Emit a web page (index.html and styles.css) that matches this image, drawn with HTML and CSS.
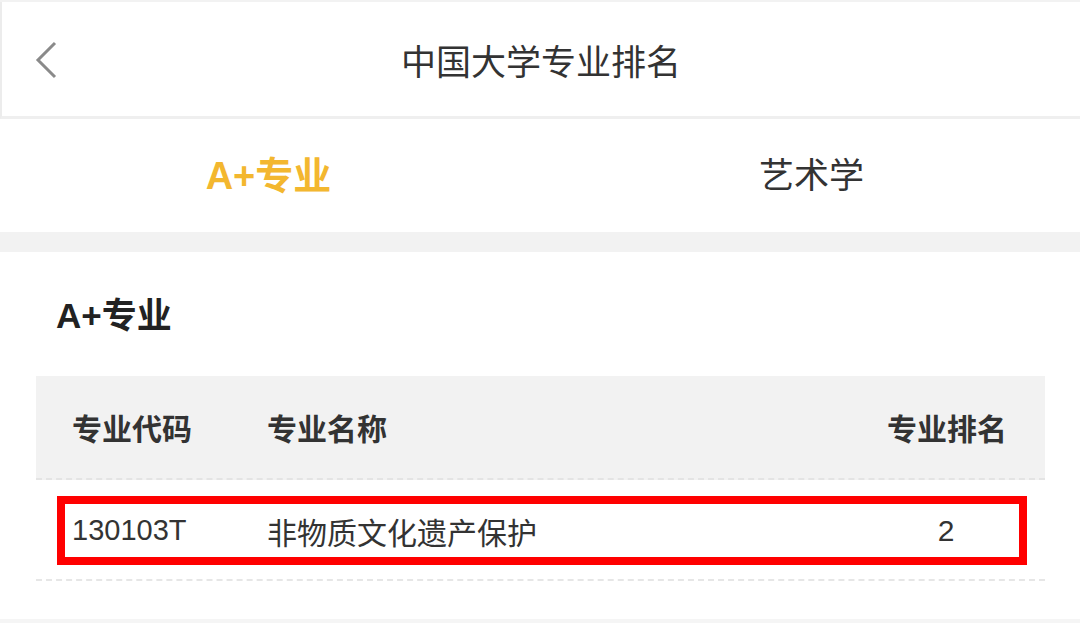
FILE: index.html
```html
<!DOCTYPE html>
<html>
    <head>
        <title>中国大学专业排名</title>
        <meta charset="UTF-8">
        <meta name="viewport" content="width=device-width, initial-scale=1.0">
        <link rel="stylesheet" href="styles.css">
    </head>
    <body>
        <div class="topbar">
            <a href="#" class="back">
                <svg width="24" height="38" viewBox="0 0 24 38">
                    <polyline points="20,2 3,19 20,36" fill="none" stroke="#8a8a8a" stroke-width="3"/>
                </svg>
            </a>
            <h1>中国大学专业排名</h1>
        </div>

        <div class="tabs">
            <div class="tab active">A+专业</div>
            <div class="tab">艺术学</div>
        </div>

        <div class="card">
            <h2>A+专业</h2>
            <div class="table">
                <div class="thead">
                    <div class="c-code">专业代码</div>
                    <div class="c-name">专业名称</div>
                    <div class="c-rank">专业排名</div>
                </div>
                <div class="row-wrap">
                    <div class="row marked">
                        <div class="c-code">130103T</div>
                        <div class="c-name">非物质文化遗产保护</div>
                        <div class="c-rank">2</div>
                    </div>
                </div>
            </div>
        </div>
    </body>
</html>
```

FILE: styles.css
```css
body {
    margin: 0;
    padding: 0;
    background-color: #f2f2f2;
    color: #333;
    font-family: "Liberation Sans", "Noto Sans CJK SC", sans-serif;
}

.topbar {
    margin-top: 2px;
    height: 114px;
    background-color: #fff;
    border-left: 2px solid #ececec;
    border-bottom: 3px solid #efefef;
    display: flex;
    align-items: center;
    justify-content: center;
    position: relative;
}
.topbar h1 {
    margin: 0;
    font-size: 35px;
    font-weight: 400;
    color: #333;
}
.back {
    position: absolute;
    left: 33px;
    top: 39px;
    display: block;
    line-height: 0;
}

.tabs {
    height: 113px;
    background-color: #fff;
    display: flex;
}
.tab {
    flex: 1;
    display: flex;
    align-items: center;
    justify-content: center;
    font-size: 35px;
    color: #333;
    padding-bottom: 6px;
}
.tab.active {
    color: #f3b72f;
    font-size: 38px;
    font-weight: 700;
}
.tab:first-child {
    padding-right: 3px;
}
.tab:last-child {
    padding-left: 3px;
}

.card {
    margin-top: 20px;
    background-color: #fff;
    padding: 40px 35px 38px 36px;
    border-bottom: 5px solid #f5f5f5;
}
.card h2 {
    margin: 0 0 0 20px;
    font-size: 35px;
    font-weight: 700;
    line-height: 48px;
    color: #222;
}

.table {
    margin-top: 36px;
}
.thead {
    display: flex;
    align-items: center;
    height: 102px;
    background-color: #f2f2f2;
    padding: 0 38px 0 36px;
    font-size: 30px;
    font-weight: 700;
    color: #333;
    border-bottom: 2px dashed #e4e4e4;
    white-space: nowrap;
}
.c-code {
    width: 195px;
}
.c-name {
    flex: 1;
}
.c-rank {
    width: 120px;
    text-align: center;
}
.thead .c-rank {
    text-align: right;
}

.row-wrap {
    padding: 16px 18px 14px 21px;
    border-bottom: 2px dashed #e6e6e6;
}
.row {
    display: flex;
    align-items: center;
    height: 53px;
    padding: 0 13px 0 7px;
    font-size: 30px;
    color: #333;
    white-space: nowrap;
}
.row.marked {
    border: 8px solid #ff0000;
}
.row .c-code {
    font-family: "Liberation Sans", sans-serif;
    font-size: 29px;
}
```
